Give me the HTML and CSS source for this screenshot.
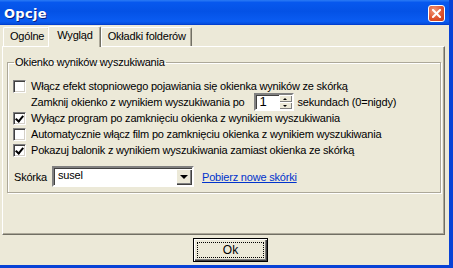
FILE: index.html
```html
<!DOCTYPE html>
<html lang="pl">
<head>
    <meta charset="UTF-8">
    <title>Opcje</title>
    <link rel="stylesheet" href="styles.css">
</head>
<body>

<div class="window">
    <!-- Title bar -->
    <div class="titlebar">
        <span class="title">Opcje</span>
        <span class="close-btn">
            <svg width="9" height="9" viewBox="0 0 9 9"><path d="M1 1L8 8M8 1L1 8" stroke="#fff" stroke-width="2" stroke-linecap="square"/></svg>
        </span>
    </div>

    <div class="client">
        <!-- Tabs -->
        <div class="tabs">
            <div class="tab">Ogólne</div>
            <div class="tab active">Wygląd</div>
            <div class="tab">Okładki folderów</div>
        </div>

        <div class="panel">
            <fieldset class="group">
                <legend>Okienko wyników wyszukiwania</legend>

                <div class="row">
                    <span class="check"></span>
                    <span>Włącz efekt stopniowego pojawiania się okienka wyników ze skórką</span>
                </div>
                <div class="row row-spin">
                    <span class="label-indent">Zamknij okienko z wynikiem wyszukiwania po</span>
                    <span class="spin">
                        <span class="spin-value">1</span>
                        <span class="spin-buttons">
                            <span class="spin-btn"><span class="arrow-up"></span></span>
                            <span class="spin-btn"><span class="arrow-down"></span></span>
                        </span>
                    </span>
                    <span>sekundach (0=nigdy)</span>
                </div>
                <div class="row">
                    <span class="check checked"></span>
                    <span>Wyłącz program po zamknięciu okienka z wynikiem wyszukiwania</span>
                </div>
                <div class="row">
                    <span class="check"></span>
                    <span>Automatycznie włącz film po zamknięciu okienka z wynikiem wyszukiwania</span>
                </div>
                <div class="row">
                    <span class="check checked"></span>
                    <span>Pokazuj balonik z wynikiem wyszukiwania zamiast okienka ze skórką</span>
                </div>

                <div class="skin-row">
                    <span>Skórka</span>
                    <span class="combo">
                        <span class="combo-value">susel</span>
                        <span class="combo-btn"><span class="arrow-down big"></span></span>
                    </span>
                    <a href="#" class="link">Pobierz nowe skórki</a>
                </div>
            </fieldset>
        </div>

        <div class="footer">
            <button class="ok-btn"><span class="focus">Ok</span></button>
        </div>
    </div>
</div>

</body>
</html>
```

FILE: styles.css
```css
body {
    margin: 0;
    padding: 0;
    background-color: #ece9d8;
    font-family: "Liberation Sans", Arial, sans-serif;
    font-size: 11px;
    letter-spacing: -0.2px;
    color: #000;
}

/* Window frame */
.window {
    width: 449px;
    height: 265px;
    border-right: 4px solid #0842d6;
    border-bottom: 3px solid #0842d6;
    display: flex;
    flex-direction: column;
    background-color: #ece9d8;
}

.titlebar {
    height: 25px;
    flex: none;
    display: flex;
    align-items: center;
    justify-content: space-between;
    padding: 0 4px 0 4px;
    background-image: linear-gradient(#2b7bf5 0, #0758ee 10%, #0452e6 45%, #0a5cf2 85%, #0650e0 94%, #0037c8 100%);
}

.title {
    color: #fff;
    font-family: "DejaVu Sans", sans-serif;
    font-weight: bold;
    font-size: 13px;
    letter-spacing: 0.3px;
    text-shadow: 1px 1px #0a1f80;
    margin-top: 1px;
}

.close-btn {
    width: 15px;
    height: 15px;
    border: 1px solid #fff;
    border-radius: 3px;
    background-image: radial-gradient(circle at 35% 30%, #f0997a, #e0542e 55%, #c63a16);
    display: flex;
    align-items: center;
    justify-content: center;
    margin-top: 2px;
}

.client {
    flex: 1;
    padding: 0 4px 0 2px;
    display: flex;
    flex-direction: column;
}

/* Tabs */
.tabs {
    display: flex;
    align-items: flex-end;
    height: 21px;
    padding-left: 1px;
}

.tab {
    height: 18px;
    line-height: 17px;
    padding: 0 5px 0 6px;
    border-top: 1px solid #fff;
    border-left: 1px solid #fff;
    border-right: 1px solid #716f64;
    border-radius: 2px 2px 0 0;
    box-shadow: inset -1px 0 #aca899;
    position: relative;
}

.tab.active {
    height: 20px;
    padding: 0 7px 0 8px;
    margin: 0 -1px -1px -2px;
    background-color: #ece9d8;
    z-index: 1;
}

.tab.active + .tab {
    margin-left: 1px;
}

.panel {
    height: 178px;
    border-top: 1px solid #fff;
    border-left: 1px solid #fff;
    border-right: 1px solid #716f64;
    border-bottom: 1px solid #716f64;
    box-shadow: inset -1px -1px #aca899;
    padding: 9px 3px 0 4px;
}

/* Group box */
.group {
    margin: 0;
    height: 125px;
    padding: 10px 0 0 5px;
    border: 1px solid #aca899;
    box-shadow: inset 1px 1px #fff, 1px 1px #fff;
}

.group legend {
    padding: 0 1px;
    margin-left: 1px;
}

.row {
    display: flex;
    align-items: center;
    height: 16px;
    white-space: nowrap;
}

.check {
    width: 11px;
    height: 11px;
    background-color: #fff;
    border: 1px solid;
    border-color: #808080 #fff #fff #808080;
    box-shadow: inset 1px 1px #404040, inset -1px -1px #d4d0c8;
    margin-right: 5px;
    position: relative;
}

.check.checked::after {
    content: "";
    position: absolute;
    left: 3px;
    top: 1px;
    width: 3px;
    height: 6px;
    border: solid #000;
    border-width: 0 2px 2px 0;
    transform: rotate(40deg);
}

.label-indent {
    margin-left: 18px;
    margin-right: 9px;
}

/* Spin edit */
.spin {
    display: flex;
    width: 36px;
    height: 14px;
    border: 2px solid;
    border-color: #808080 #fff #fff #808080;
    box-shadow: inset 1px 1px #404040;
    background-color: #fff;
    margin-right: 4px;
}

.spin-value {
    flex: 1;
    padding-left: 4px;
    font-size: 13px;
    line-height: 14px;
}

.spin-buttons {
    width: 13px;
    display: flex;
    flex-direction: column;
}

.spin-btn {
    flex: 1;
    background-color: #ece9d8;
    box-shadow: inset 1px 1px #fff, inset -1px -1px #808080;
    display: flex;
    align-items: center;
    justify-content: center;
}

.arrow-up {
    border-left: 2px solid transparent;
    border-right: 2px solid transparent;
    border-bottom: 2px solid #000;
}

.arrow-down {
    border-left: 2px solid transparent;
    border-right: 2px solid transparent;
    border-top: 2px solid #000;
}

.arrow-down.big {
    border-left-width: 4px;
    border-right-width: 4px;
    border-top-width: 4px;
}

/* Skin chooser */
.skin-row {
    display: flex;
    align-items: center;
    margin-top: 8px;
    margin-left: 1px;
}

.combo {
    display: flex;
    width: 138px;
    height: 17px;
    border: 2px solid;
    border-color: #808080 #fff #fff #808080;
    box-shadow: inset 1px 1px #404040;
    background-color: #fff;
    margin: 0 8px 0 5px;
}

.combo-value {
    flex: 1;
    padding: 1px 0 0 4px;
}

.combo-btn {
    width: 16px;
    margin: 1px 0 0;
    background-color: #ece9d8;
    box-shadow: inset 1px 1px #fff, inset -1px -1px #404040, inset -2px -2px #808080;
    display: flex;
    align-items: center;
    justify-content: center;
}

.link {
    color: #0033cc;
    text-decoration: underline;
}

/* Footer */
.footer {
    flex: 1;
    display: flex;
    align-items: center;
    padding-left: 191px;
}

.ok-btn {
    width: 75px;
    height: 24px;
    padding: 3px;
    font-family: inherit;
    font-size: 12px;
    background-color: #ece9d8;
    border: 1px solid #000;
    box-shadow: inset 1px 1px #fff, inset -1px -1px #404040, inset -2px -2px #808080;
}

.ok-btn .focus {
    display: block;
    height: 14px;
    line-height: 14px;
    border: 1px dotted #000;
}
```
